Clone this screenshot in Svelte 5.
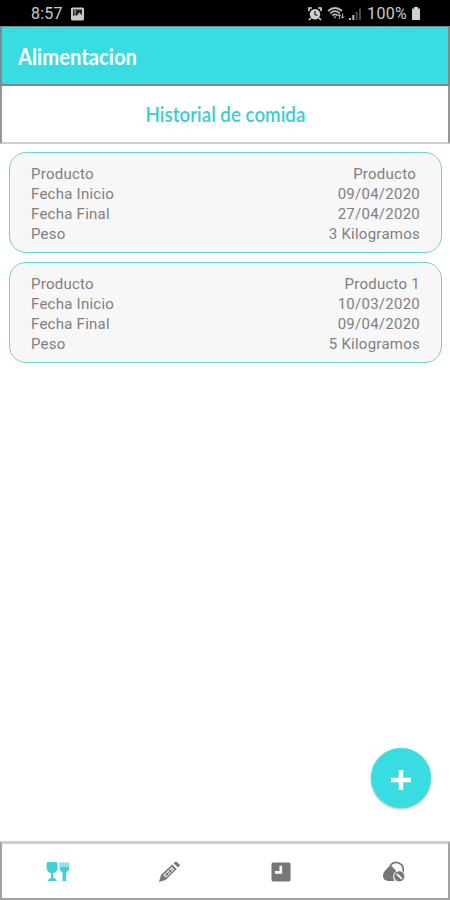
<script>
    let activeTab = 0;

    const meals = [
        { product: "Producto", start: "09/04/2020", end: "27/04/2020", weight: "3 Kilogramos", trailing: true },
        { product: "Producto 1", start: "10/03/2020", end: "09/04/2020", weight: "5 Kilogramos" },
    ];

    const tabs = ["food", "edit", "clock", "pills"];

    function selectTab(index) {
        activeTab = index;
    }
</script>

<div class="screen">
    <div class="status">
        <span class="time">8:57</span>
        <svg class="photo" width="15" height="14" viewBox="0 0 14 14">
            <rect x="0.5" y="0.5" width="13" height="13" rx="1.5" fill="#c9c9c9" />
            <path d="M2.5 2.5h9v6L9 5.5 6 9 4.5 7.5l-2 2z" fill="#222" />
            <path d="M4 3h1v4H4z" fill="#c9c9c9" />
        </svg>
        <div class="indicators">
            <svg width="14" height="14" viewBox="0 0 14 14">
                <path d="M1 4V1h3M10 1h3v3M3 11l-2 2M11 11l2 2" stroke="#d0d0d0" stroke-width="1.7" fill="none" />
                <circle cx="7" cy="7.3" r="5.2" fill="#d0d0d0" />
                <path d="M7 4v3.5l2.5 1" stroke="#222" stroke-width="1.3" fill="none" />
            </svg>
            <svg width="19" height="15" viewBox="0 0 19 15">
                <path d="M1 5Q8 -1 15 5M3.2 7.3Q8 3 12.8 7.3M5.4 9.5Q8 7.4 10.6 9.5" stroke="#bbb" stroke-width="1.7" fill="none" />
                <path d="M6.5 10.5h3L8 12.5z" fill="#bbb" />
                <path d="M12.3 13V8.5M10.8 10l1.5-1.8 1.5 1.8M15.6 7.5V12M14.1 10.5l1.5 1.8 1.5-1.8" stroke="#bbb" stroke-width="1" fill="none" />
            </svg>
            <svg width="14" height="14" viewBox="0 0 14 14">
                <path d="M1 11h2v2H1zM4.3 8h2v5h-2z" fill="#bbb" />
                <path d="M7.7 5h2v8h-2zM11 1.5h2V13h-2z" fill="#4b4b4b" />
            </svg>
            <span class="percent">100%</span>
            <svg width="10" height="15" viewBox="0 0 10 15">
                <path d="M3 1h4v1.5h1.3q.7 0 .7.7v10q0 .8-.8.8H1.8q-.8 0-.8-.8v-10q0-.7.7-.7H3z" fill="#d0d0d0" />
            </svg>
        </div>
    </div>

    <header class="appbar">
        <h1>Alimentacion</h1>
    </header>

    <div class="subtitle">
        <h2>Historial de comida</h2>
    </div>

    <main>
        {#each meals as meal}
            <article class="card">
                <div class="row"><span>Producto</span><span class:trailing={meal.trailing}>{meal.product}</span></div>
                <div class="row"><span>Fecha Inicio</span><span>{meal.start}</span></div>
                <div class="row"><span>Fecha Final</span><span>{meal.end}</span></div>
                <div class="row"><span>Peso</span><span>{meal.weight}</span></div>
            </article>
        {/each}
    </main>

    <button class="fab" aria-label="Agregar">
        <svg width="20" height="20" viewBox="0 0 20 20">
            <path d="M10 0v20M0 10h20" stroke="#fff" stroke-width="4.6" />
        </svg>
    </button>

    <nav>
        {#each tabs as tab, index}
            <button class="tab" class:active={index === activeTab} aria-label={tab} on:click={() => selectTab(index)}>
                {#if tab === "food"}
                    <svg width="26" height="22" viewBox="0 0 26 22" fill="currentColor">
                        <path d="M2 1h10q1.6 4.5.3 8-1.1 3-4 3.3V17q3 .4 3.3 3H2.8q.3-2.6 3.2-3v-4.7q-2.9-.4-4-3.3-1.3-3.5 0-8z" />
                        <path d="M14.6 6H24v1.5q0 2.7-2.8 3.4V20h-3.7v-9.1q-2.9-.7-2.9-3.4z" />
                        <path d="M14.6 1.5H24V6h-9.4z" opacity=".45" />
                        <path d="M14.6 1.5h1.3V6h-1.3zM17.3 1.5h1.2V6h-1.2zM20 1.5h1.2V6H20zM22.7 1.5H24V6h-1.3z" opacity=".6" />
                    </svg>
                {:else if tab === "edit"}
                    <svg width="24" height="24" viewBox="0 0 24 24">
                        <path d="M2 22l2-7L15.2 4.5l4.5 4.6L8.5 20z" fill="currentColor" />
                        <path d="M16.7 3.2l1.6-1.4q.8-.7 1.6.1l2.6 2.6q.8.8 0 1.6L21 7.6z" fill="currentColor" />
                        <path d="M6.2 15.2L14.8 7l2.4 2.4-8.4 8.2z" fill="#fff" />
                        <path d="M9 13l2 2M12 9.8l2.2 2.2M8 16l7.5-7.1" stroke="currentColor" stroke-width="1.2" />
                    </svg>
                {:else if tab === "clock"}
                    <svg width="20" height="20" viewBox="0 0 20 20">
                        <rect x="0.5" y="0.5" width="19" height="19" rx="1.7" fill="currentColor" />
                        <path d="M9.8 3.8v6.6H4" stroke="#fff" stroke-width="2.6" fill="none" />
                    </svg>
                {:else}
                    <svg class="pills" width="24" height="24" viewBox="0 0 24 24">
                        <path d="M8 5.5Q12 1 17 3q5.5 3 3.8 9" stroke="currentColor" stroke-width="1.7" fill="none" />
                        <path d="M8.5 4.8l6 6.4q-4 3-2.6 8.3.3 1 .8 1.5H6.5Q1 20.5.9 15.5q0-2.5 2.1-4.8z" fill="currentColor" />
                        <circle cx="17.3" cy="16.3" r="5.6" fill="currentColor" stroke="#fff" stroke-width="1" />
                        <path d="M14.7 13.9l5.2 4.9" stroke="#fff" stroke-width="1.7" />
                    </svg>
                {/if}
            </button>
        {/each}
    </nav>
</div>

<style>
    :global(body) {
        background: #fff;
    }

    .screen {
        position: relative;
        box-sizing: border-box;
        width: 450px;
        height: 900px;
        display: flex;
        flex-direction: column;
        background: #fff;
        font-family: Roboto, "Liberation Sans", sans-serif;
        overflow: hidden;
    }

    .status {
        display: flex;
        align-items: center;
        box-sizing: border-box;
        height: 26px;
        padding: 1px 29px 0 31px;
        background: #000;
        color: #c9c9c9;
        font-size: 16px;
    }

    .time {
        width: 39px;
        letter-spacing: 0.2px;
    }

    .indicators {
        display: flex;
        align-items: center;
        margin-left: auto;
    }

    .indicators svg:nth-child(2) {
        margin-left: 5px;
    }

    .indicators svg:nth-child(3) {
        margin-left: 2px;
    }

    .percent {
        margin: 0 4px 0 5px;
        letter-spacing: 0.3px;
    }

    .appbar {
        display: flex;
        align-items: center;
        box-sizing: border-box;
        height: 60px;
        padding: 0 0 0 16px;
        background: #39dce1;
        border: 2px solid #758e91;
        border-top-width: 1px;
    }

    h1,
    h2 {
        margin: 0;
        font-family: Lato, "Open Sans", sans-serif;
        white-space: nowrap;
    }

    h1 {
        color: #fff;
        font-size: 23px;
        line-height: 28px;
        font-weight: 700;
        transform: scaleX(0.88);
        transform-origin: left;
    }

    .subtitle {
        display: flex;
        justify-content: center;
        align-items: center;
        box-sizing: border-box;
        height: 58px;
        border: solid #969696;
        border-width: 0 2px 2px;
        border-bottom-color: #cfcfcf;
    }

    h2 {
        color: #3bcdd0;
        font-size: 21px;
        line-height: 26px;
        font-weight: 600;
        transform: scaleX(0.893);
    }

    main {
        flex: 1;
        display: flex;
        flex-direction: column;
        gap: 9px;
        padding: 8px 8px 0 9px;
    }

    .card {
        box-sizing: border-box;
        height: 101px;
        padding: 11px 21px 0 21px;
        border: 1.5px solid #6bd5d0;
        border-radius: 17px;
        background: #f7f7f7;
        color: #808080;
        font-size: 15px;
        line-height: 20px;
        letter-spacing: 0.25px;
    }

    .row {
        display: flex;
        justify-content: space-between;
    }

    .trailing {
        padding-right: 4px;
    }

    .fab {
        position: absolute;
        right: 19px;
        bottom: 92px;
        display: flex;
        justify-content: center;
        align-items: center;
        width: 60px;
        height: 60px;
        padding: 3px 0 0;
        border: 0;
        border-radius: 50%;
        background: #39dce1;
        box-shadow: 0 1px 3px rgba(0, 0, 0, 0.3);
    }

    nav {
        display: flex;
        box-sizing: border-box;
        height: 59px;
        border: 2px solid #a2a2a2;
        border-top: 3px solid #d0d0d0;
    }

    .tab {
        flex: 1;
        display: flex;
        justify-content: center;
        align-items: center;
        padding: 1px 0 0;
        border: 0;
        background: #fff;
        color: #777;
    }

    .tab.active {
        color: #43d1d8;
    }

    .pills {
        margin-left: 4px;
    }
</style>
